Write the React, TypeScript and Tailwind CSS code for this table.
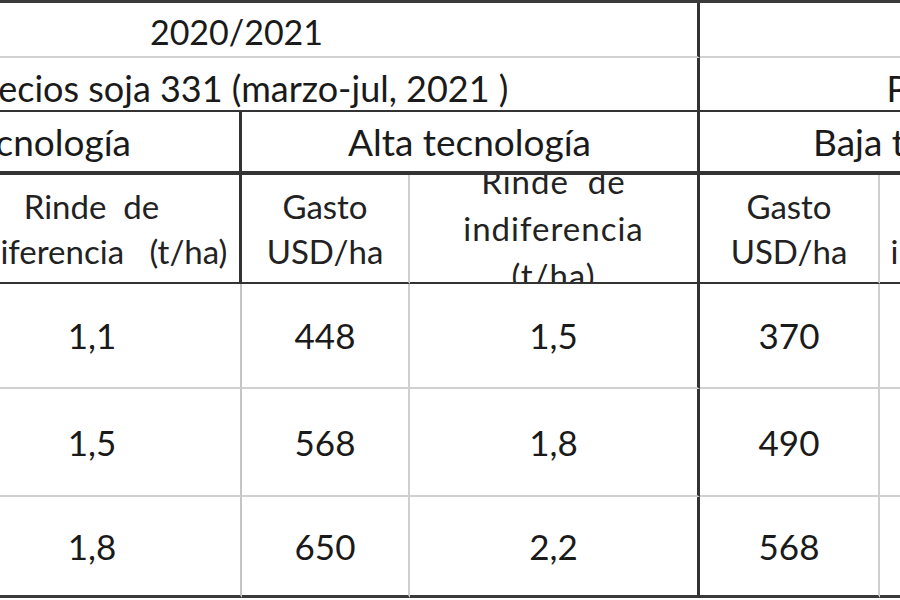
import React from "react";

// tabla de rindes de indiferencia (recorte de planilla)
const rows = [
  ["365", "1,1", "448", "1,5", "370", "1,1", "448", "1,4"],
  ["490", "1,5", "568", "1,8", "490", "1,5", "568", "1,7"],
  ["595", "1,8", "650", "2,2", "568", "1,7", "650", "2,0"],
];

// borde derecho de cada columna en las filas de datos
const dataBorders = [
  "border-r-2 border-r-[#cfcfcf]",
  "border-r-2 border-r-[#c4c4c4]",
  "border-r-2 border-r-[#cfcfcf]",
  "border-r-[3px] border-r-[#333333]",
  "border-r-2 border-r-[#cfcfcf]",
  "border-r-2 border-r-[#c4c4c4]",
  "border-r-2 border-r-[#cfcfcf]",
  "border-r-[3px] border-r-[#333333]",
];

const headBorders = [
  "border-r-2 border-r-[#cfcfcf]",
  "border-r-[3px] border-r-[#333333]",
  "border-r-2 border-r-[#cfcfcf]",
  "border-r-[3px] border-r-[#333333]",
  "border-r-2 border-r-[#cfcfcf]",
  "border-r-[3px] border-r-[#333333]",
  "border-r-2 border-r-[#cfcfcf]",
  "border-r-[3px] border-r-[#333333]",
];

const Gasto = () => (
  <div className="flex flex-col items-center leading-[45px]">
    <span>Gasto</span>
    <span>USD/ha</span>
  </div>
);

const RindeAncho = () => (
  <div className="flex flex-col items-center leading-[45px] whitespace-pre">
    <span>Rinde  de</span>
    <span>indiferencia   (t/ha)</span>
  </div>
);

const RindeAngosto = () => (
  <div className="flex flex-col items-center leading-[47px] tracking-[1px]">
    <span className="whitespace-pre">Rinde  de</span>
    <span>indiferencia</span>
    <span>(t/ha)</span>
  </div>
);

const headers = [<Gasto />, <RindeAncho />, <Gasto />, <RindeAngosto />, <Gasto />, <RindeAncho />, <Gasto />, <RindeAngosto />];

export default function App() {
  return (
    <div className="w-[900px] h-[600px] overflow-hidden bg-white text-[#1a1a1a] font-['Lato',sans-serif]">
      <div className="ml-[-224px] w-max grid grid-cols-[168px_298px_168px_290px_180px_296px_168px_290px] grid-rows-[55px_54px_63px_109px_105px_108px_101px] border-t-[3px] border-t-[#3a3a3a]">
        {/* fila 1: campaña */}
        <div className="col-span-4 flex items-center justify-center pt-[4px] text-[34px] border-r-[3px] border-r-[#333333] border-b-2 border-b-[#d2d2d2]">
          2020/2021
        </div>
        <div className="col-span-4 flex items-center justify-center pt-[4px] text-[34px] border-r-[3px] border-r-[#333333] border-b-2 border-b-[#d2d2d2]">
          2021/2022
        </div>

        {/* fila 2: precios */}
        <div className="col-span-4 flex items-center justify-center pt-[8px] text-[36px] whitespace-pre border-r-[3px] border-r-[#333333] border-b-2 border-b-[#333333]">
          Precios soja 331 (marzo-jul, 2021 )
        </div>
        <div className="col-span-4 flex items-center justify-center pt-[8px] pr-[14px] text-[36px] whitespace-pre border-r-[3px] border-r-[#333333] border-b-2 border-b-[#333333]">
          Precios soja 331 (marzo-jul, 2021 )
        </div>

        {/* fila 3: nivel tecnológico */}
        {["Baja tecnología", "Alta tecnología", "Baja tecnología", "Alta tecnología"].map((t, i) => (
          <div
            key={i}
            className="col-span-2 flex items-center justify-center text-[37px] border-r-[3px] border-r-[#333333] border-b-4 border-b-[#333333]">
            {t}
          </div>
        ))}

        {/* fila 4: encabezados */}
        {headers.map((h, i) => (
          <div
            key={i}
            className={`flex items-center justify-center overflow-hidden text-[33px] text-[#222222] border-b-2 border-b-[#333333] ${headBorders[i]}`}>
            {h}
          </div>
        ))}

        {/* datos */}
        {rows.map((r, ri) =>
          r.map((v, ci) => (
            <div
              key={`${ri}-${ci}`}
              className={`flex items-center justify-center text-[35px] ${dataBorders[ci]} ${
                ri === 2 ? "border-b-[3px] border-b-[#3a3a3a]" : "border-b-2 border-b-[#d0d0d0]"
              }`}>
              {v}
            </div>
          ))
        )}
      </div>
    </div>
  );
}
